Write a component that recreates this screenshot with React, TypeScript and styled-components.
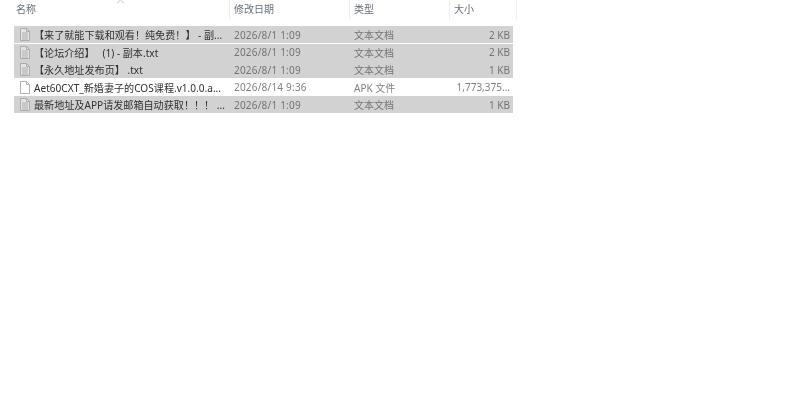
import { createGlobalStyle } from 'styled-components';
import styled from 'styled-components';

const GlobalStyle = createGlobalStyle`
  html, body {
    margin: 0;
    padding: 0;
    background: #fff;
  }
  body {
    font-family: "Noto Sans", "Noto Sans CJK SC", sans-serif;
  }
`;

const Page = styled.div`
  width: 800px;
  height: 417px;
  overflow: hidden;
  background: #fff;
  filter: blur(0.35px);
`;

const Header = styled.div`
  position: relative;
  display: grid;
  grid-template-columns: 216px 120px 100px 67px;
  width: 503px;
  height: 26px;
  margin-left: 14px;
`;

const HeaderCell = styled.div`
  height: 20px;
  padding-left: 4px;
  border-right: 1px solid #f0f0f0;
  font-size: 10px;
  line-height: 18px;
  color: #66707a;
  &:first-child {
    padding-left: 2px;
  }
`;

const SortArrow = styled.svg`
  position: absolute;
  left: 102px;
  top: 0;
  width: 9px;
  height: 3px;
`;

const Rows = styled.div`
  width: 499px;
  margin-left: 14px;
  display: flex;
  flex-direction: column;
  gap: 0.6px;
`;

const Row = styled.div<{ $selected: boolean }>`
  display: grid;
  grid-template-columns: 215px 120px 100px 64px;
  height: 17px;
  align-items: center;
  font-size: 10px;
  background: ${p => (p.$selected ? '#d2d2d2' : '#fff')};
`;

const NameCell = styled.div`
  display: flex;
  align-items: center;
  min-width: 0;
  padding-left: 5px;
  font-size: 10.1px;
  color: #303030;
  white-space: pre;
`;

const FileIcon = styled.svg`
  flex-shrink: 0;
  width: 12px;
  height: 15px;
  margin-right: 3px;
`;

const Cell = styled.div<{ $dark: boolean }>`
  padding-left: 5px;
  white-space: nowrap;
  color: ${p => (p.$dark ? '#737373' : '#808080')};
`;

const DateCell = styled(Cell)`
  letter-spacing: 0.2px;
`;

const SizeCell = styled.div<{ $dark: boolean }>`
  text-align: right;
  padding-right: 3px;
  white-space: nowrap;
  margin-left: -14px;
  color: ${p => (p.$dark ? '#737373' : '#808080')};
`;

const FILES = [
  { name: '【来了就能下载和观看！纯免费！】 - 副...', date: '2026/8/1 1:09', type: '文本文档', size: '2 KB', text: true },
  { name: '【论坛介绍】   (1) - 副本.txt', date: '2026/8/1 1:09', type: '文本文档', size: '2 KB', text: true },
  { name: '【永久地址发布页】 .txt', date: '2026/8/1 1:09', type: '文本文档', size: '1 KB', text: true },
  { name: 'Aet60CXT_新婚妻子的COS课程.v1.0.0.a...', date: '2026/8/14 9:36', type: 'APK 文件', size: '1,773,375...', text: false },
  { name: '最新地址及APP请发邮箱自动获取！！！ ...', date: '2026/8/1 1:09', type: '文本文档', size: '1 KB', text: true },
];

function DocIcon({ lines }: { lines: boolean }) {
  return (
    <FileIcon viewBox="0 0 12 15" fill="none">
      <path d="M1.5 1.5h6l3 3v9h-9z" fill={lines ? '#e4e4e4' : '#fff'} stroke="#a0a0a0" strokeWidth="0.8" />
      <path d="M7.5 1.5v3h3" stroke="#a0a0a0" strokeWidth="0.8" />
      {lines && <path d="M3 6h6M3 8h6M3 10h6M3 12h6" stroke="#a0a0a0" strokeWidth="0.8" />}
    </FileIcon>
  );
}

export default function App() {
  return (
    <Page>
      <GlobalStyle />
      <Header>
        <HeaderCell>名称</HeaderCell>
        <HeaderCell>修改日期</HeaderCell>
        <HeaderCell>类型</HeaderCell>
        <HeaderCell>大小</HeaderCell>
        <SortArrow viewBox="0 0 9 3" fill="none">
          <path d="M1 3l3.5-3L8 3" stroke="#b8b8b8" strokeWidth="0.8" />
        </SortArrow>
      </Header>
      <Rows>
        {FILES.map(f => (
          <Row key={f.name} $selected={f.text}>
            <NameCell>
              <DocIcon lines={f.text} />
              {f.name}
            </NameCell>
            <DateCell $dark={f.text}>{f.date}</DateCell>
            <Cell $dark={f.text}>{f.type}</Cell>
            <SizeCell $dark={f.text}>{f.size}</SizeCell>
          </Row>
        ))}
      </Rows>
    </Page>
  );
}
